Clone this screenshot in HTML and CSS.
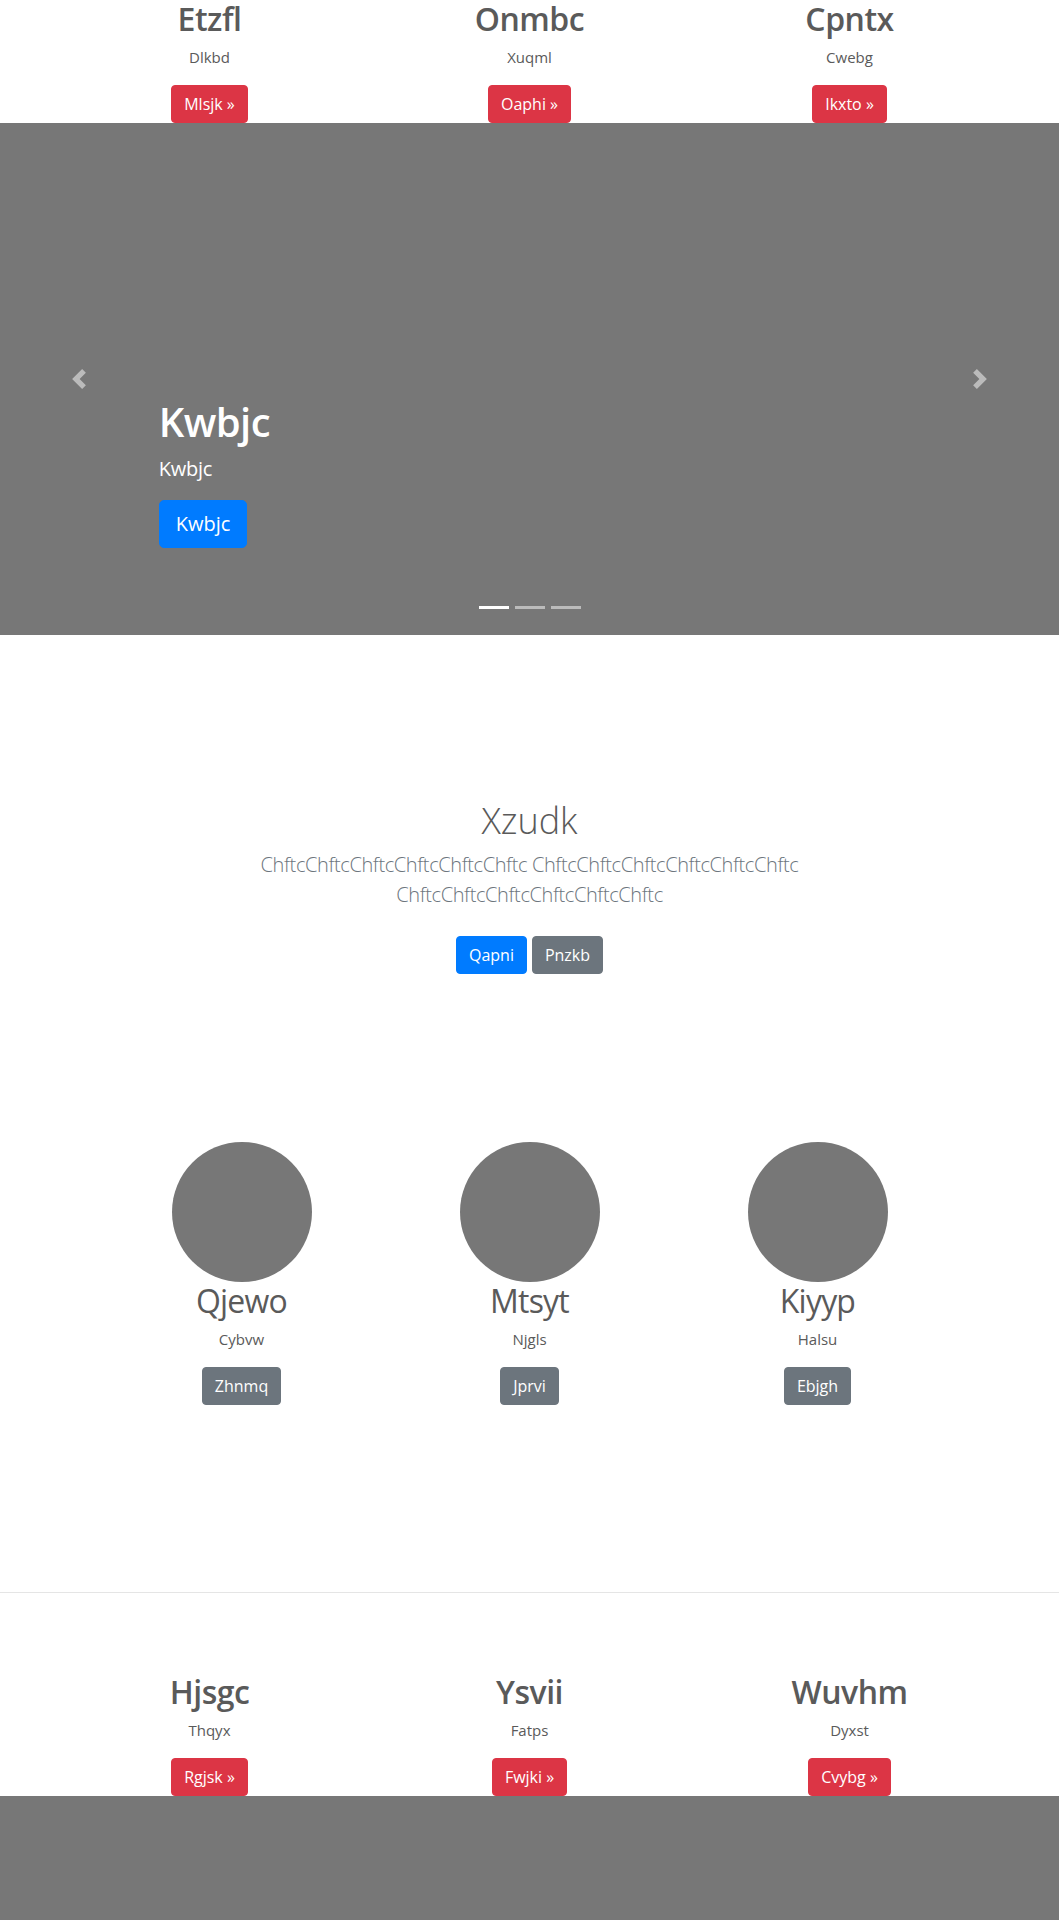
FILE: index.html
```html
<!DOCTYPE html>
<html lang="en">
<head>
<meta charset="utf-8">
<title>Carousel</title>
<link rel="stylesheet" href="styles.css">
</head>
<body>
<main class="page">
  <section class="features">
    <div class="feature">
      <h2 class="feature-title">Etzfl</h2>
      <p class="feature-text">Dlkbd</p>
      <p class="feature-action"><a class="btn btn-danger" href="#">Mlsjk &raquo;</a></p>
    </div>
    <div class="feature">
      <h2 class="feature-title">Onmbc</h2>
      <p class="feature-text">Xuqml</p>
      <p class="feature-action"><a class="btn btn-danger" href="#">Oaphi &raquo;</a></p>
    </div>
    <div class="feature">
      <h2 class="feature-title">Cpntx</h2>
      <p class="feature-text">Cwebg</p>
      <p class="feature-action"><a class="btn btn-danger" href="#">Ikxto &raquo;</a></p>
    </div>
  </section>

  <div class="carousel">
    <div class="carousel-item">
      <div class="carousel-caption">
        <h1 class="caption-title">Kwbjc</h1>
        <p class="caption-lead">Kwbjc</p>
        <p class="caption-action"><a class="btn btn-lg btn-primary" href="#">Kwbjc</a></p>
      </div>
    </div>
    <ol class="carousel-indicators">
      <li class="active"></li>
      <li></li>
      <li></li>
    </ol>
    <a class="carousel-control control-prev" href="#" aria-label="Previous">
      <svg class="control-icon" viewBox="0 0 8 8" width="20" height="20"><path d="M5.25 0l-4 4 4 4 1.5-1.5L4.25 4l2.5-2.5L5.25 0z"/></svg>
    </a>
    <a class="carousel-control control-next" href="#" aria-label="Next">
      <svg class="control-icon" viewBox="0 0 8 8" width="20" height="20"><path d="M2.75 0l-1.5 1.5L3.75 4l-2.5 2.5L2.75 8l4-4-4-4z"/></svg>
    </a>
  </div>

  <section class="intro">
    <div class="intro-inner">
      <h1 class="intro-title">Xzudk</h1>
      <p class="intro-lead">ChftcChftcChftcChftcChftcChftc ChftcChftcChftcChftcChftcChftc ChftcChftcChftcChftcChftcChftc</p>
      <p class="intro-actions">
        <a class="btn btn-primary" href="#">Qapni</a>
        <a class="btn btn-secondary" href="#">Pnzkb</a>
      </p>
    </div>
  </section>

  <section class="marketing">
    <div class="member">
      <svg class="avatar" width="140" height="140" viewBox="0 0 140 140"><circle cx="70" cy="70" r="70"/></svg>
      <h2 class="member-name">Qjewo</h2>
      <p class="member-text">Cybvw</p>
      <p class="member-action"><a class="btn btn-secondary" href="#">Zhnmq</a></p>
    </div>
    <div class="member">
      <svg class="avatar" width="140" height="140" viewBox="0 0 140 140"><circle cx="70" cy="70" r="70"/></svg>
      <h2 class="member-name">Mtsyt</h2>
      <p class="member-text">Njgls</p>
      <p class="member-action"><a class="btn btn-secondary" href="#">Jprvi</a></p>
    </div>
    <div class="member">
      <svg class="avatar" width="140" height="140" viewBox="0 0 140 140"><circle cx="70" cy="70" r="70"/></svg>
      <h2 class="member-name">Kiyyp</h2>
      <p class="member-text">Halsu</p>
      <p class="member-action"><a class="btn btn-secondary" href="#">Ebjgh</a></p>
    </div>
  </section>

  <hr class="divider">

  <section class="features">
    <div class="feature">
      <h2 class="feature-title">Hjsgc</h2>
      <p class="feature-text">Thqyx</p>
      <p class="feature-action"><a class="btn btn-danger" href="#">Rgjsk &raquo;</a></p>
    </div>
    <div class="feature">
      <h2 class="feature-title">Ysvii</h2>
      <p class="feature-text">Fatps</p>
      <p class="feature-action"><a class="btn btn-danger" href="#">Fwjki &raquo;</a></p>
    </div>
    <div class="feature">
      <h2 class="feature-title">Wuvhm</h2>
      <p class="feature-text">Dyxst</p>
      <p class="feature-action"><a class="btn btn-danger" href="#">Cvybg &raquo;</a></p>
    </div>
  </section>

  <div class="carousel carousel-last"></div>
</main>
</body>
</html>
```

FILE: styles.css
```css
* { box-sizing: border-box; }

html, body {
  margin: 0;
  padding: 0;
}

body {
  font-family: "Open Sans", "Noto Sans", "Liberation Sans", sans-serif;
  font-size: 16px;
  line-height: 1.5;
  color: #5a5a5a;
  background: #fff;
}

.page {
  height: 1920px;
  overflow: hidden;
}

/* Buttons */
.btn {
  display: inline-block;
  font-size: 16px;
  line-height: 1.5;
  padding: 6px 12px;
  border: 1px solid transparent;
  border-radius: 4px;
  color: #fff;
  text-decoration: none;
  white-space: nowrap;
}
.btn-lg {
  font-size: 20px;
  padding: 8px 16px;
  border-radius: 5px;
}
.btn-danger { background: #dc3545; border-color: #dc3545; }
.btn-primary { background: #007bff; border-color: #007bff; }
.btn-secondary { background: #6c757d; border-color: #6c757d; }

/* Feature rows */
.features {
  width: 960px;
  margin: 0 auto;
  display: grid;
  grid-template-columns: repeat(3, 1fr);
  text-align: center;
}
.feature { padding: 0 15px; }
.feature-title {
  margin: 0 0 8px;
  font-size: 32px;
  line-height: 1.2;
  font-weight: 600;
  letter-spacing: -0.5px;
}
.feature-text { margin: 0 0 16px; font-size: 15px; }
.feature-action {
  margin: 0;
  display: flex;
  justify-content: center;
}

/* Carousel */
.carousel {
  position: relative;
  height: 512px;
  background: #777;
  margin-bottom: 64px;
}
.carousel-item {
  height: 100%;
  display: flex;
  flex-direction: column;
  justify-content: flex-end;
  padding: 0 15% 51px;
}
.carousel-caption {
  padding: 20px 0;
  color: #fff;
  position: relative;
  z-index: 10;
}
.caption-title {
  margin: 0 0 8px;
  font-size: 40px;
  line-height: 1.2;
  font-weight: 600;
  letter-spacing: -0.6px;
}
.caption-lead {
  margin: 0 0 16px;
  font-size: 20px;
  line-height: 1.5;
  letter-spacing: -0.3px;
}
.caption-action {
  margin: 0 0 16px;
  display: flex;
}

.carousel-indicators {
  position: absolute;
  left: 0;
  right: 0;
  bottom: 0;
  z-index: 15;
  display: flex;
  justify-content: center;
  list-style: none;
  padding: 0;
  margin: 0 15% 16px;
}
.carousel-indicators li {
  box-sizing: content-box;
  width: 30px;
  height: 3px;
  margin: 0 3px;
  background: #fff;
  background-clip: padding-box;
  border-top: 10px solid transparent;
  border-bottom: 10px solid transparent;
  opacity: .5;
}
.carousel-indicators li.active { opacity: 1; }

.carousel-control {
  position: absolute;
  top: 0;
  bottom: 0;
  width: 15%;
  display: flex;
  align-items: center;
  justify-content: center;
  opacity: .5;
}
.control-prev { left: 0; }
.control-next { right: 0; }
.control-icon { fill: #fff; display: block; }

.carousel-last { margin-bottom: 0; }

/* Intro */
.intro {
  padding: 100px 15px 96px;
  text-align: center;
}
.intro-inner {
  max-width: 610px;
  margin: 0 auto;
}
.intro-title {
  margin: 0 0 8px;
  font-size: 36px;
  line-height: 1.2;
  font-weight: 300;
}
.intro-lead {
  margin: 0 0 16px;
  font-size: 20px;
  line-height: 1.5;
  font-weight: 300;
  letter-spacing: -0.4px;
  color: #6c757d;
}
.intro-actions {
  margin: 0;
  padding: 10px 0 8px;
  display: flex;
  justify-content: center;
  gap: 5px;
}

/* Marketing */
.marketing {
  width: 960px;
  margin: 0 auto;
  padding: 64px 48px 67px;
  display: grid;
  grid-template-columns: repeat(3, 1fr);
  text-align: center;
}
.member { margin-bottom: 24px; }
.avatar { display: block; margin: 0 auto; fill: #777; }
.member-name {
  margin: 0 0 8px;
  font-size: 32px;
  line-height: 1.2;
  font-weight: 400;
  letter-spacing: -0.8px;
}
.member-text { margin: 0 12px 16px; font-size: 15px; }
.member-action {
  margin: 0 0 16px;
  display: flex;
  justify-content: center;
}

.divider {
  margin: 80px 0;
  border: 0;
  border-top: 1px solid rgba(0, 0, 0, .1);
  height: 0;
}
```
